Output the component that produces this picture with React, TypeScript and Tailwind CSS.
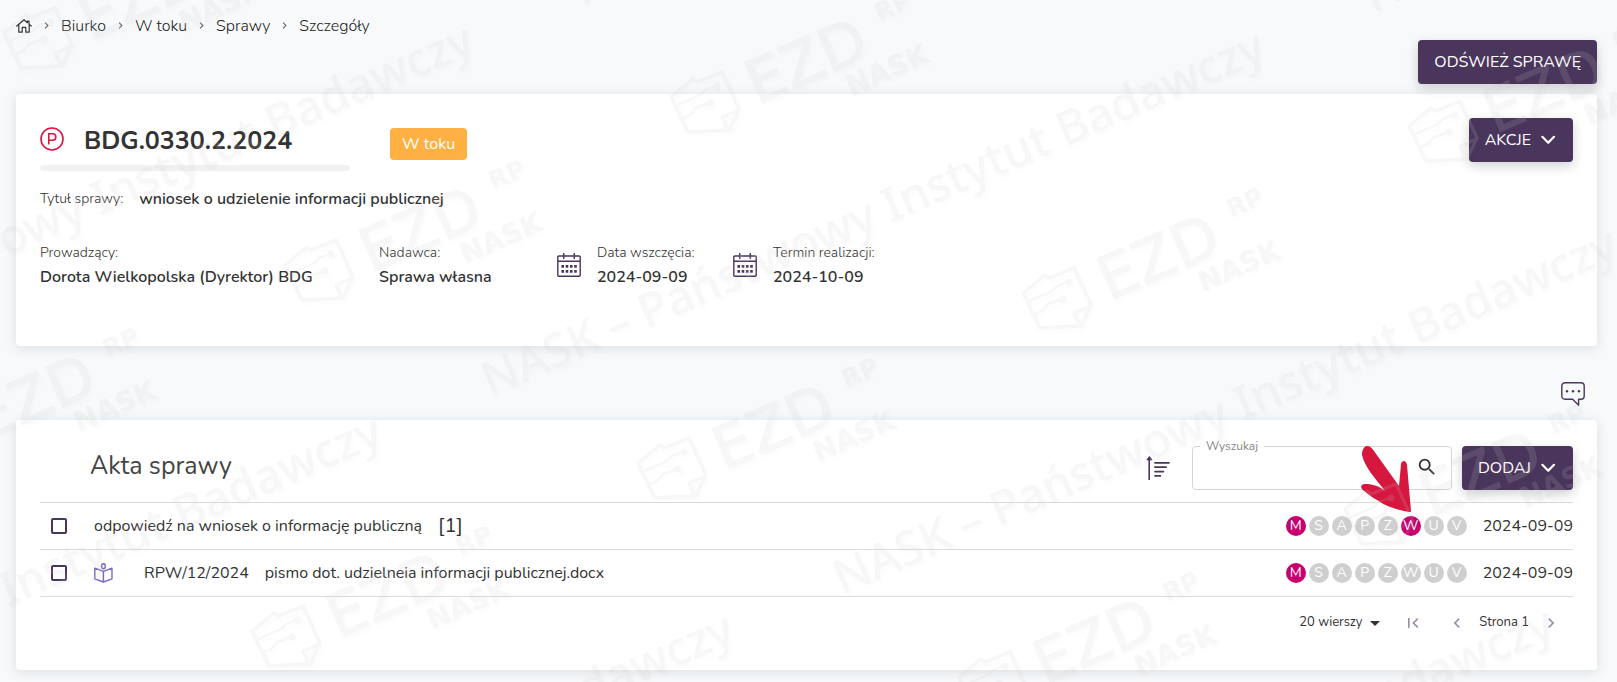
import React from 'react';
import { MdSearch, MdArrowDropDown, MdFirstPage, MdChevronLeft, MdChevronRight } from 'react-icons/md';
import { clsx } from 'clsx';

const BREADCRUMBS = ['Biurko', 'W toku', 'Sprawy', 'Szczegóły'];

const FLAGS = ['M', 'S', 'A', 'P', 'Z', 'W', 'U', 'V'];

const DOCUMENTS = [
  { id: 1, title: 'odpowiedź na wniosek o informację publiczną', count: '[1]', active: ['M', 'W'], date: '2024-09-09', pointed: 'W' },
  { id: 2, symbol: 'RPW/12/2024', title: 'pismo dot. udzielneia informacji publicznej.docx', active: ['M'], date: '2024-09-09' },
];

const WATERMARK_LOGOS = [
  [2, 5], [669, 69], [1407, 98], [-103, 405], [283, 237], [1021, 265],
  [636, 435], [250, 603], [1343, 481], [957, 649],
];

const WATERMARK_LINES = [
  [-301, 390], [582, 6], [-393, 781], [490, 397], [1373, 12],
  [-41, 979], [842, 595], [779, 974],
];

const HomeIcon = () => (
  <svg className="w-4 h-4" viewBox="0 0 16 16" fill="none" stroke="#333" strokeWidth="1.2" strokeLinejoin="round" strokeLinecap="round">
    <path d="M.8 8 8 1.8l3.4 2.9V3.2h1.6v2.9L15.2 8" />
    <path d="M2.8 6.8v7.4h3.4V9.4h3.6v4.8h3.4V6.8" />
  </svg>
);

const CalendarIcon = () => (
  <svg className="w-6 h-6 shrink-0" viewBox="0 0 24 24" fill="none" stroke="#4a355c" strokeWidth="1.4">
    <rect x=".8" y="3" width="22.4" height="20.2" rx="1" />
    <path d="M.8 8.3h22.4M6.7 0v6M17.3 0v6" />
    <path d="M4.4 13.4h15.4M4.4 18.4h15.4" strokeWidth="2.6" strokeDasharray="2.6 1.67" />
  </svg>
);

const CommentIcon = () => (
  <svg className="w-6 h-6" viewBox="0 0 24 24" fill="none" stroke="#4a355c" strokeWidth="1.4" strokeLinejoin="round">
    <path d="M4 .8h16a3.2 3.2 0 0 1 3.2 3.2v10a3.2 3.2 0 0 1-3.2 3.2h-2.4v6l-6-6H4A3.2 3.2 0 0 1 .8 14V4A3.2 3.2 0 0 1 4 .8Z" />
    <g fill="#4a355c" stroke="none">
      <circle cx="6" cy="9.3" r="1.2" />
      <circle cx="12" cy="9.3" r="1.2" />
      <circle cx="18" cy="9.3" r="1.2" />
    </g>
  </svg>
);

const SortIcon = () => (
  <svg className="w-6 h-6" viewBox="0 0 24 24" fill="none" stroke="#4a355c" strokeWidth="1.6" strokeLinecap="round">
    <path d="M3.2 2v21.4" />
    <path d="M3.2.8.9 3.8h4.6Z" fill="#4a355c" strokeWidth="1" />
    <path d="M9 6.8h14M9 11.2h11M9 15.6h8.4M9 19.8h5.4" strokeWidth="1.8" />
  </svg>
);

const BookIcon = () => (
  <svg className="w-5 h-5" viewBox="0 0 20 20" fill="none" stroke="#7a6cc4" strokeWidth="1.4" strokeLinejoin="round">
    <ellipse cx="9.4" cy="3.2" rx="1.9" ry="2.5" />
    <path d="M9.4 8.4.8 5.2v10.6l8.6 3.2 8.6-3.2V5.2L9.4 8.4Zm0 0V19" />
  </svg>
);

const ArrowDown = () => (
  <svg className="w-4 h-4" viewBox="0 0 16 16" fill="none" stroke="currentColor" strokeWidth="2.2" strokeLinecap="round" strokeLinejoin="round">
    <path d="m1.4 4.8 5.8 6 5.8-6" />
  </svg>
);

const Watermark = () => (
  <svg className="fixed inset-0 w-full h-full pointer-events-none z-20 opacity-15 drop-shadow-[2px_3px_2px_rgba(0,0,0,0.12)]" fill="#c8c8c8" aria-hidden="true">
    {WATERMARK_LOGOS.map(([x, y]) => (
      <g key={`${x}-${y}`} transform={`translate(${x} ${y})`}>
        <g fill="none" stroke="#c8c8c8" strokeWidth="3.4" strokeLinejoin="round">
          <path d="m2 28 22-18 4 3 25-10 17 37-10 21-41 2Z" />
          <path d="m70 41-17 7 6 13" />
          <path d="m6 37 25-11 5-5 10-4M14 49l7-3 6-7 14-5" strokeWidth="2.4" />
        </g>
        <circle cx="48" cy="17" r="3.4" />
        <circle cx="42" cy="34" r="3.4" />
        <text transform="translate(88 36) rotate(-23.5)" fontFamily="DejaVu Sans" fontSize="60" stroke="#c8c8c8" strokeWidth="1">EZD</text>
        <text transform="translate(210 -47) rotate(-23.5)" fontFamily="DejaVu Sans" fontWeight="700" fontSize="25">RP</text>
        <text transform="translate(182 27) rotate(-23.5)" fontFamily="DejaVu Sans" fontWeight="700" fontSize="28">NASK</text>
      </g>
    ))}
    {WATERMARK_LINES.map(([x, y]) => (
      <text key={`${x}-${y}`} transform={`translate(${x} ${y}) rotate(-23.5)`} fontFamily="Noto Sans" fontWeight="500" fontSize="47">
        NASK – Państwowy Instytut Badawczy
      </text>
    ))}
  </svg>
);

const Field: React.FC<{ label: string; value: string }> = ({ label, value }) => (
  <div>
    <dt className="text-sm leading-6 font-light">{label}</dt>
    <dd className="font-semibold leading-6">{value}</dd>
  </div>
);

export default function App() {
  return (
    <div className="min-h-screen bg-[#f7f9fb] px-4 pr-5 pb-3 text-base text-[#333] font-[Nunito,Lato,sans-serif]">
      <nav className="flex items-center h-10 pt-3 pb-px font-light text-[#222]" aria-label="Okruszki">
        <a href="#" aria-label="Strona główna"><HomeIcon /></a>
        {BREADCRUMBS.map((item) => (
          <React.Fragment key={item}>
            <MdChevronRight className="w-[13px] h-[13px] mx-2 text-[#666]" />
            <a href="#">{item}</a>
          </React.Fragment>
        ))}
      </nav>

      <div className="flex justify-end mb-2.5">
        <button className="h-11 px-4 rounded bg-[#4a355c] text-white shadow-[0_4px_12px_rgba(0,0,0,0.18)]">ODŚWIEŻ SPRAWĘ</button>
      </div>

      {/* Case details */}
      <section className="h-[252px] p-6 bg-white rounded shadow-[0_2px_12px_rgba(60,80,90,0.15)]">
        <div className="flex items-start justify-between">
          <div className="flex items-start gap-10">
            <div className="w-[310px]">
              <div className="flex items-center gap-5 h-[47px] pb-1.5">
                <svg className="w-6 h-6" viewBox="0 0 24 24" fill="none" stroke="#d6183f">
                  <circle cx="12" cy="12" r="11" strokeWidth="1.6" />
                  <path d="M8.8 17.6V6.8h3.8a3.2 3.2 0 0 1 0 6.4H8.8" strokeWidth="1.6" />
                </svg>
                <h1 className="pt-1 text-[25px] leading-8 font-bold">BDG.0330.2.2024</h1>
              </div>
              <div className="h-1.5 rounded-full bg-[#eff1f3]" />
            </div>
            <span className="mt-2.5 h-8 px-3 leading-8 rounded bg-[#ffb042] text-white">W toku</span>
          </div>
          <button className="flex items-center gap-2.5 h-11 px-4 rounded bg-[#4a355c] text-white shadow-[0_4px_12px_rgba(0,0,0,0.18)]">
            AKCJE
            <ArrowDown />
          </button>
        </div>

        <p className="flex items-center gap-4 mt-4 leading-6">
          <span className="text-sm font-light">Tytuł sprawy:</span>
          <strong className="font-semibold">wniosek o udzielenie informacji publicznej</strong>
        </p>

        <dl className="flex items-center mt-[30px]">
          <div className="w-[339px]"><Field label="Prowadzący:" value="Dorota Wielkopolska (Dyrektor) BDG" /></div>
          <div className="w-[178px]"><Field label="Nadawca:" value="Sprawa własna" /></div>
          <div className="flex items-center gap-4 w-44">
            <CalendarIcon />
            <Field label="Data wszczęcia:" value="2024-09-09" />
          </div>
          <div className="flex items-center gap-4">
            <CalendarIcon />
            <Field label="Termin realizacji:" value="2024-10-09" />
          </div>
        </dl>
      </section>

      <div className="flex justify-end h-[74px] items-end pb-3.5 pr-3">
        <button aria-label="Komentarze"><CommentIcon /></button>
      </div>

      {/* Case files */}
      <section className="h-[250px] px-6 pt-[26px] bg-white rounded shadow-[0_2px_12px_rgba(60,80,90,0.15)]">
        <div className="flex items-center h-14 pb-3">
          <h2 className="flex-1 pl-[50px] pb-0.5 text-[25px] text-[#444]">Akta sprawy</h2>
          <button className="mr-[22px]" aria-label="Sortuj"><SortIcon /></button>
          <div className="relative mr-2.5">
            <input id="search" type="text" className="block w-[260px] h-11 pl-4 pr-10 border border-[#d5d5d5] rounded bg-white" />
            <label htmlFor="search" className="absolute left-2 -top-2 px-1.5 text-xs bg-white text-[#888]">Wyszukaj</label>
            <MdSearch className="absolute right-3.5 top-2.5 w-[22px] h-[22px]" />
          </div>
          <button className="flex items-center gap-2.5 h-11 px-4 rounded bg-[#4a355c] text-white shadow-[0_4px_12px_rgba(0,0,0,0.18)]">
            DODAJ
            <ArrowDown />
          </button>
        </div>

        <table className="w-full border-t border-[#dcdcdc]">
          <tbody>
            {DOCUMENTS.map((doc) => (
              <tr key={doc.id} className="h-[47px] border-b border-[#dcdcdc]">
                <td className="w-[54px] pl-[11px]">
                  <input
                    type="checkbox"
                    aria-label={doc.title}
                    className="block appearance-none w-4 h-4 border-2 border-[#4a355c] rounded-[2px] bg-white"
                  />
                </td>
                <td>
                  <div className="flex items-center gap-4">
                    {doc.symbol && (
                      <>
                        <span className="w-[34px]"><BookIcon /></span>
                        <span>{doc.symbol}</span>
                      </>
                    )}
                    <span>{doc.title}</span>
                    {doc.count && <span className="text-xl">{doc.count}</span>}
                  </div>
                </td>
                <td className="w-[197px]">
                  <div className="flex gap-[3px]">
                    {FLAGS.map((flag) => (
                      <span
                        key={flag}
                        className={clsx(
                          'relative w-5 h-5 rounded-full text-center text-sm leading-5 text-white',
                          doc.active.includes(flag) ? 'bg-[#c6006f]' : 'bg-[#cfcfcf]'
                        )}
                      >
                        {flag}
                        {doc.pointed === flag && (
                          <svg className="absolute right-1/2 bottom-full mb-1 w-[50px] h-[66px] z-10" viewBox="0 0 50 66" fill="#d6183f">
                            <path d="M1 9C1 4 3 0 6 0c3 0 5 2 7 5l25 35 2-22c0-2 2-3 3-3s3 2 3 4l4 46c0 1-1 1-2 1-11-2-22-5-32-12C9 50 3 45 1 43c-2-3 0-5 3-5 8 0 14 2 20 7C15 33 4 22 1 9Z" />
                          </svg>
                        )}
                      </span>
                    ))}
                  </div>
                </td>
                <td className="w-[90px] text-right whitespace-nowrap">{doc.date}</td>
              </tr>
            ))}
          </tbody>
        </table>

        <div className="flex items-center justify-end h-[52px] pr-3 text-[13px]">
          <div className="relative mr-4">
            <select aria-label="Liczba wierszy" className="appearance-none pr-6 bg-transparent">
              <option>20 wierszy</option>
            </select>
            <MdArrowDropDown className="absolute right-0 -top-0.5 w-6 h-6 pointer-events-none" />
          </div>
          <button className="mr-6 text-[#9d91a8]" aria-label="Pierwsza strona"><MdFirstPage className="w-5 h-5" /></button>
          <button className="mr-3 text-[#9d91a8]" aria-label="Poprzednia strona"><MdChevronLeft className="w-5 h-5" /></button>
          <span>Strona 1</span>
          <button className="ml-3 text-[#9d91a8]" aria-label="Następna strona"><MdChevronRight className="w-5 h-5" /></button>
        </div>
      </section>

      <Watermark />
    </div>
  );
}
